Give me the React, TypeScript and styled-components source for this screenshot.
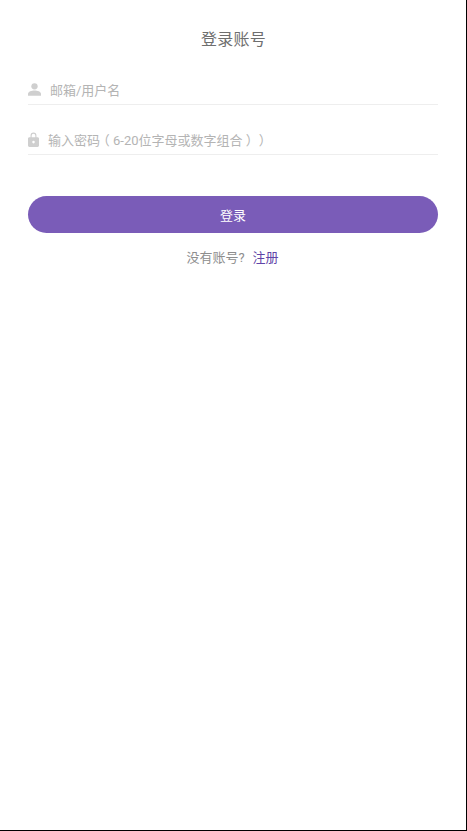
import React from "react";
import styled, { createGlobalStyle } from "styled-components";

const Global = createGlobalStyle`
  html, body { margin: 0; padding: 0; background: #000; }
  body { font-family: Roboto, "Noto Sans CJK SC", sans-serif; }
`;

const Page = styled.main`
  width: 466px;
  height: 830px;
  background: #fff;
  box-sizing: border-box;
  padding: 29px 28px 0;
  display: flex;
  flex-direction: column;
  overflow: hidden;
`;

const Title = styled.h1`
  margin: 0 0 22px 0;
  padding-left: 1px;
  height: 21px;
  line-height: 21px;
  text-align: center;
  font-size: 16px;
  font-weight: 400;
  color: #6e6e6e;
  letter-spacing: 0.2px;
`;

const Field = styled.div<{ $gap: number }>`
  height: 33px;
  margin-bottom: 17px;
  box-sizing: border-box;
  padding-top: 6px;
  display: flex;
  align-items: center;
  gap: ${(p) => p.$gap}px;
  border-bottom: 1px solid #eee;
`;

const IconBox = styled.span<{ $lift: number }>`
  width: 14px;
  height: 15px;
  flex: none;
  display: flex;
  margin-top: -${(p) => p.$lift}px;
  svg { display: block; }
`;

const Placeholder = styled.span`
  font-size: 13px;
  color: #b4b4b4;
  line-height: 18px;
  white-space: nowrap;
`;

const Paren = styled.span`
  font-feature-settings: "halt";
  padding: 0 3.25px;
`;

const Submit = styled.button`
  margin-top: 24px;
  height: 37px;
  width: 410px;
  border: none;
  border-radius: 18.5px;
  background: #7a5cb8;
  color: #fff;
  font: inherit;
  font-size: 13px;
  padding: 0;
`;

const Footer = styled.p`
  margin: 16px 0 0 0;
  padding-right: 1px;
  text-align: center;
  font-size: 13px;
  line-height: 18px;
  color: #8e8e8e;
`;

const Register = styled.a`
  color: #5f45a8;
  margin-left: 8px;
  text-decoration: none;
`;

const UserIcon = () => (
  <svg width="13" height="13" viewBox="0 0 14 14" fill="#cfcfcf">
    <circle cx="7" cy="3.6" r="3.4" />
    <path d="M0 13.6V11.8C0 9.2 4 8.1 7 8.1s7 1.1 7 3.7v1.8z" />
  </svg>
);

const LockIcon = () => (
  <svg width="11" height="15" viewBox="0 0 13 16" preserveAspectRatio="none">
    <path
      fill="#cfcfcf"
      fillRule="evenodd"
      d="M1.6 5.5H3V4a3.5 3.5 0 0 1 7 0v1.5h1.4c.8 0 1.6.7 1.6 1.5v7.4c0 .8-.8 1.6-1.6 1.6H1.6C.8 16 0 15.2 0 14.4V7c0-.8.8-1.5 1.6-1.5zM4.3 5.5h4.4V4a2.2 2.2 0 0 0-4.4 0z"
    />
    <circle cx="6.5" cy="10.7" r="1.5" fill="#fff" />
  </svg>
);

export default function App() {
  return (
    <Page>
      <Global />
      <Title>登录账号</Title>
      <Field $gap={8}>
        <IconBox $lift={2}><UserIcon /></IconBox>
        <Placeholder>邮箱/用户名</Placeholder>
      </Field>
      <Field $gap={6}>
        <IconBox $lift={4}><LockIcon /></IconBox>
        <Placeholder>
          输入密码<Paren>（</Paren>6-20位字母或数字组合<Paren>）</Paren><Paren>）</Paren>
        </Placeholder>
      </Field>
      <Submit type="button">登录</Submit>
      <Footer>
        没有账号?<Register href="#">注册</Register>
      </Footer>
    </Page>
  );
}
